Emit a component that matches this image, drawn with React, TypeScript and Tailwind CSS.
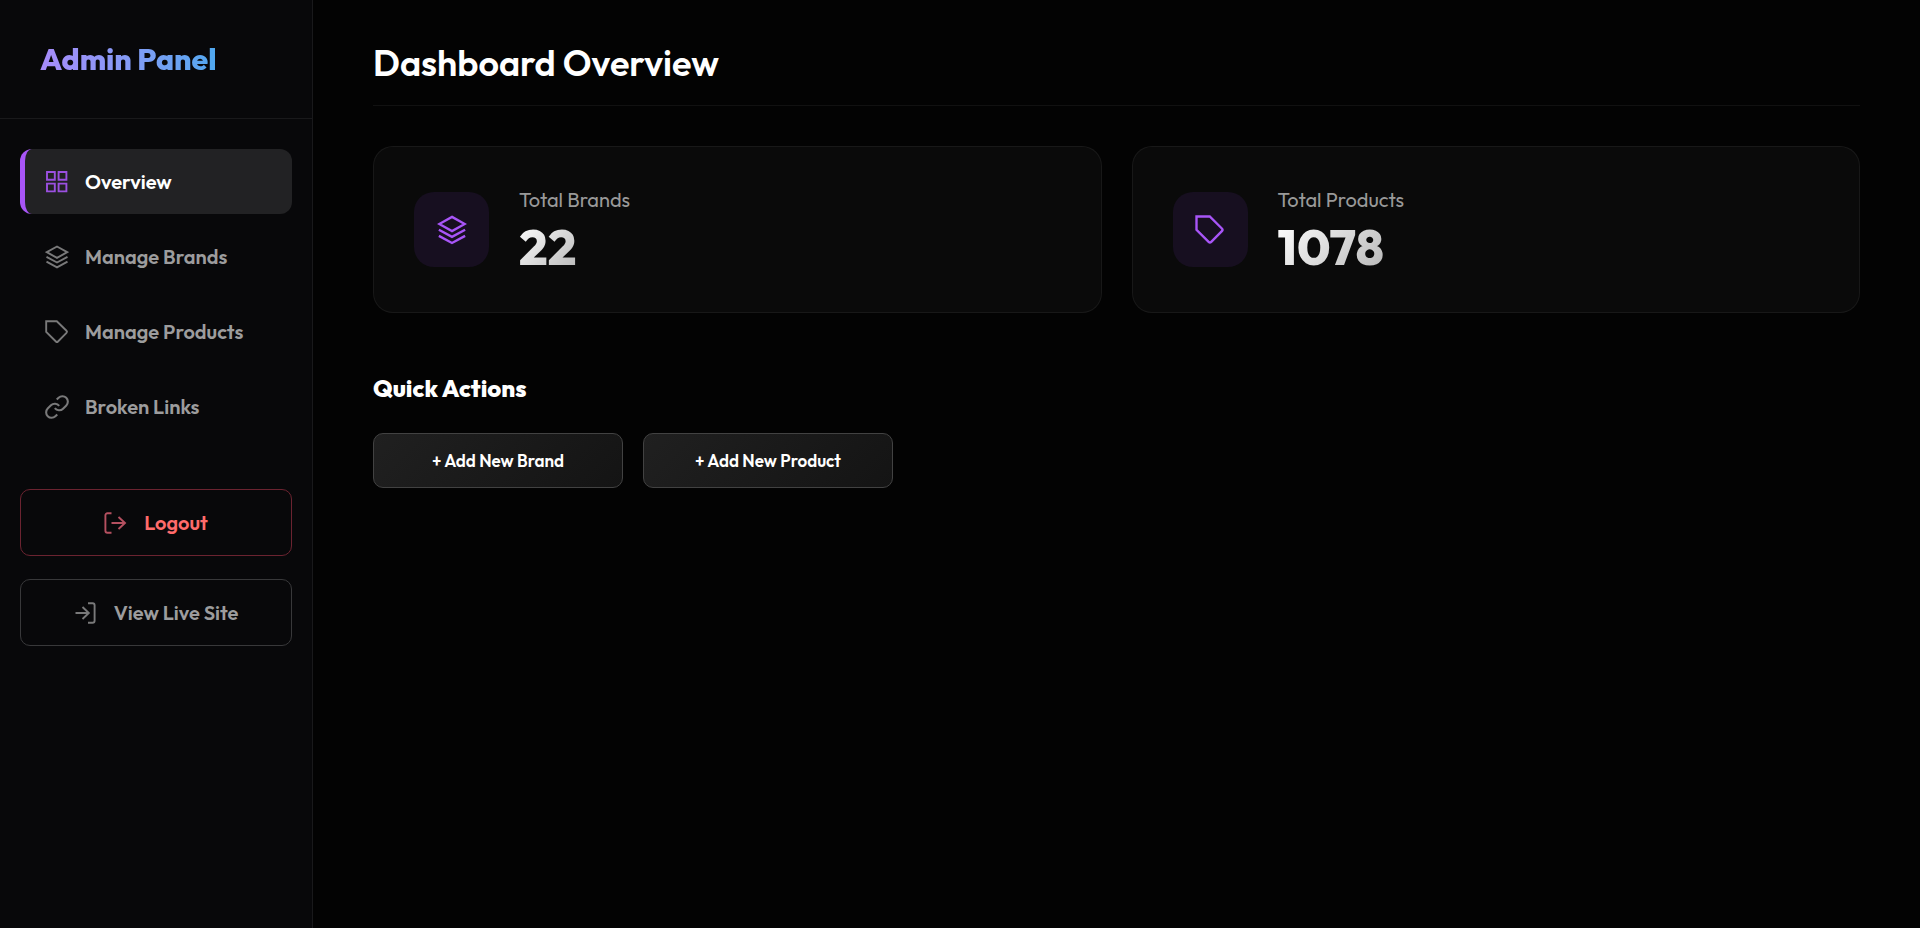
import type { ReactNode } from "react";

type IconProps = { className?: string };

function Icon({
  className,
  viewBox = "0 0 24 24",
  children,
}: IconProps & { viewBox?: string; children: ReactNode }) {
  return (
    <svg
      className={className}
      viewBox={viewBox}
      fill="none"
      stroke="currentColor"
      strokeWidth="1.9"
      aria-hidden="true"
    >
      {children}
    </svg>
  );
}

const GridIcon = ({ className }: IconProps) => (
  <Icon className={className}>
    <path d="M2 2h7.800v7.800H2zM13.600 2h7.800v7.800h-7.800zM2 13.600h7.800v7.800H2zM13.600 13.600h7.800v7.800h-7.800z" />
  </Icon>
);

const LayersIcon = ({ className }: IconProps) => (
  <Icon className={className}>
    <path d="M12 1.500 22.200 7.200 12 12.900 1.800 7.200z" />
    <path d="M1.500 11.800 12 17.500l10.500-5.700M1.500 16.700 12 22.400l10.500-5.700" />
  </Icon>
);

const TagIcon = ({ className }: IconProps) => (
  <Icon className={className}>
    <path d="M1.200 1.200H11.800L21.500 10.800a1.500 1.500 0 0 1 0 2.100L13 21.500a1.500 1.500 0 0 1-2.100 0L1.200 11.800z" />
  </Icon>
);

const LinkIcon = ({ className }: IconProps) => (
  <Icon className={className} viewBox="1 1 22 22">
    <path d="M10 13a5 5 0 0 0 7.540.540l3-3a5 5 0 0 0-7.070-7.070l-1.720 1.710" />
    <path d="M14 11a5 5 0 0 0-7.540-.540l-3 3a5 5 0 0 0 7.070 7.070l1.710-1.710" />
  </Icon>
);

const LogoutIcon = ({ className }: IconProps) => (
  <Icon className={className}>
    <path d="M7.500 2.300H3.400a2 2 0 0 0-2 2v15.400a2 2 0 0 0 2 2h4.100M7.500 12h13.500M14.500 6l6.500 6-6.500 6" />
  </Icon>
);

const LoginIcon = ({ className }: IconProps) => (
  <Icon className={className}>
    <path d="M14 2.300h4.600a2 2 0 0 1 2 2v15.400a2 2 0 0 1-2 2H14M1.500 12h13.300M8.500 6l6.300 6-6.300 6" />
  </Icon>
);

const links = [
  { label: "Overview", icon: GridIcon, active: true },
  { label: "Manage Brands", icon: LayersIcon, active: false },
  { label: "Manage Products", icon: TagIcon, active: false },
  { label: "Broken Links", icon: LinkIcon, active: false },
];

const stats = [
  { label: "Total Brands", value: 22, icon: LayersIcon },
  { label: "Total Products", value: 1078, icon: TagIcon },
];

function Sidebar() {
  return (
    <aside className="w-[313px] shrink-0 border-r border-white/7 bg-[#08080a]">
      <div className="border-b border-white/7 px-10 pt-[41px] pb-10">
        <h2 className="w-fit bg-linear-to-r from-[#a78bfa] to-[#4fa8f0] bg-clip-text text-[30px] leading-[37px] font-extrabold text-transparent">
          Admin Panel
        </h2>
      </div>
      <nav className="flex flex-col gap-[10px] px-5 pt-[30px]">
        {links.map(({ label, icon: LinkGlyph, active }) => (
          <a
            key={label}
            href="#"
            className={`flex h-[65px] items-center gap-4 rounded-xl border-l-[5px] px-5 text-xl font-semibold ${
              active
                ? "border-[#a855f7] bg-[#222224] text-white"
                : "border-transparent text-[#9c9c9d]"
            }`}
          >
            <LinkGlyph
              className={`size-6 ${active ? "text-[#9b50e0]" : "text-[#79797a]"}`}
            />
            {label}
          </a>
        ))}
      </nav>
      <div className="flex flex-col gap-[23px] px-5 pt-[50px]">
        <button className="flex h-[67px] items-center justify-center gap-4 rounded-[10px] border border-[#6b2330] text-xl font-semibold text-[#ff6b6b]">
          <LogoutIcon className="size-6 text-[#b55060]" />
          Logout
        </button>
        <a
          href="#"
          className="flex h-[67px] items-center justify-center gap-4 rounded-[10px] border border-[#38383a] text-xl font-semibold text-[#9c9c9d]"
        >
          <LoginIcon className="size-6 text-[#79797a]" />
          View Live Site
        </a>
      </div>
    </aside>
  );
}

export default function App() {
  return (
    <div className="flex min-h-screen bg-[#030303] font-[Outfit,Lato,sans-serif] text-white">
      <Sidebar />
      <main className="flex-1 px-15 pt-10">
        <header className="border-b border-white/6 pb-5">
          <h1 className="text-[36px] leading-[45px] font-semibold">
            Dashboard Overview
          </h1>
        </header>
        <section className="mt-10 grid grid-cols-2 gap-[30px]">
          {stats.map(({ label, value, icon: StatIcon }) => (
            <div
              key={label}
              className="flex h-[167px] items-center gap-[30px] rounded-[20px] border border-white/6 bg-[#0a0a0a] px-10"
            >
              <div className="flex size-[75px] items-center justify-center rounded-[20px] bg-[#170f20]">
                <StatIcon className="size-[30px] text-[#a855f7]" />
              </div>
              <div>
                <p className="mb-[10px] text-xl leading-[25px] text-[#999999]">
                  {label}
                </p>
                <p className="w-fit bg-linear-135 from-white to-[#b8b8b8] bg-clip-text text-[50px] leading-[50px] font-extrabold text-transparent">
                  {value}
                </p>
              </div>
            </div>
          ))}
        </section>
        <section className="mt-15">
          <h3 className="text-2xl leading-[30px] font-extrabold">
            Quick Actions
          </h3>
          <div className="mt-[30px] flex gap-5">
            {["+ Add New Brand", "+ Add New Product"].map((action) => (
              <button
                key={action}
                className="h-[55px] w-[250px] rounded-[10px] border border-[#424242] bg-linear-135 from-[#202020] to-[#141414] text-[17px] font-semibold"
              >
                {action}
              </button>
            ))}
          </div>
        </section>
      </main>
    </div>
  );
}
